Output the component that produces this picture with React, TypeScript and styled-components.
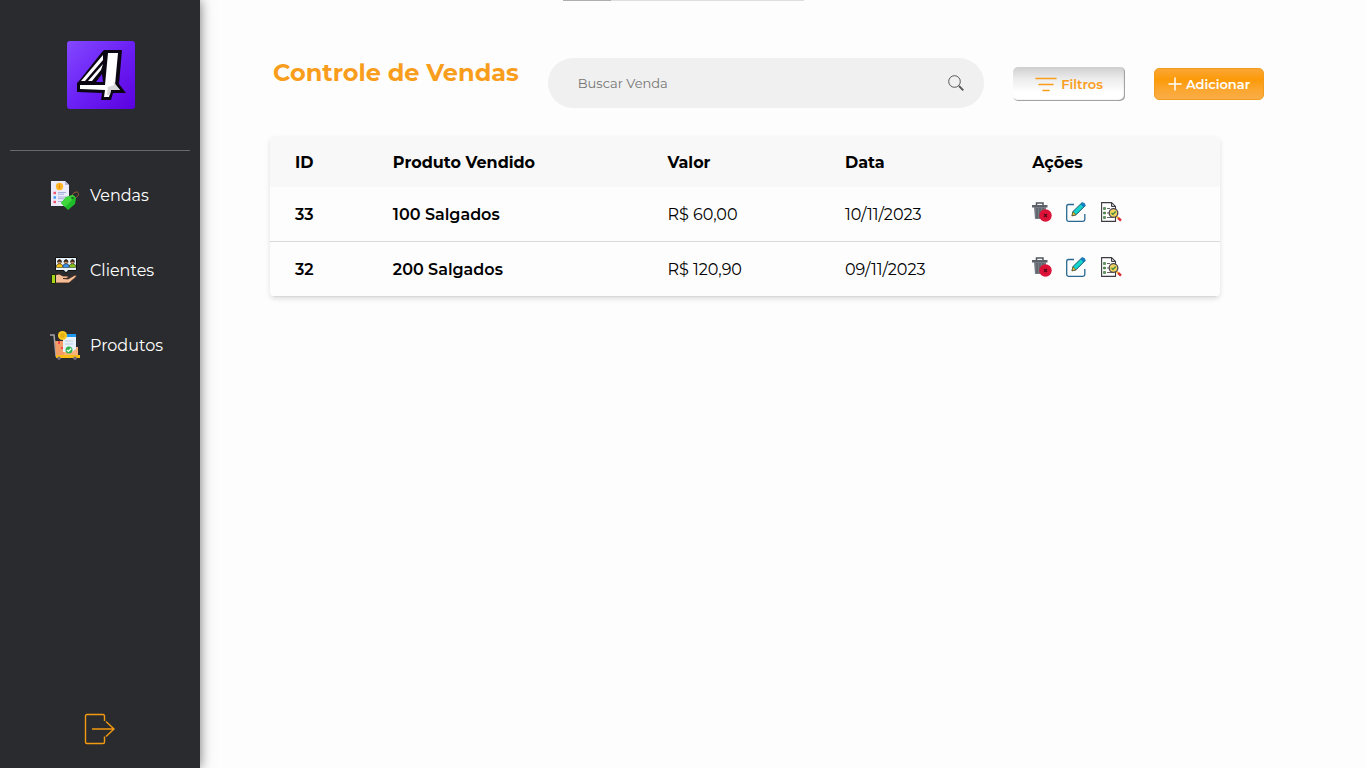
import React from "react";
import styled, { createGlobalStyle } from "styled-components";

const GlobalStyle = createGlobalStyle`
  *, *::before, *::after { box-sizing: border-box; }
  body {
    margin: 0;
    background: #fdfdfd;
    color: #000;
    font-family: Montserrat, Inter, "Open Sans", sans-serif;
    font-size: 16px;
  }
`;

const Layout = styled.div`
  display: flex;
  min-height: 100vh;
`;

const Sidebar = styled.aside`
  flex: 0 0 200px;
  display: flex;
  flex-direction: column;
  padding: 0 10px 23px;
  background: #2a2b2e;
  box-shadow: 0 0 12px rgba(0, 0, 0, 0.55);
`;

const Brand = styled.div`
  display: flex;
  justify-content: center;
  padding: 41px 0 41px 2px;
  border-bottom: 1px solid #68696b;
`;

const Nav = styled.nav`
  display: flex;
  flex-direction: column;
  flex: 1;
  padding-top: 7px;
`;

const NavLink = styled.a`
  display: flex;
  align-items: center;
  gap: 10px;
  height: 75px;
  padding-left: 40px;
  color: #fff;
  font-weight: 400;
  text-decoration: none;
`;

const PlainButton = styled.button`
  display: inline-flex;
  align-items: center;
  justify-content: center;
  padding: 0;
  border: 0;
  background: none;
  color: inherit;
  cursor: pointer;
`;

const LogoutButton = styled(PlainButton)`
  align-self: center;
  color: #f39a12;
`;

const Main = styled.main`
  flex: 1;
  min-width: 0;
  padding: 58px 102px 40px 70px;
`;

const Progress = styled.div`
  position: absolute;
  top: 0;
  left: 563px;
  width: 241px;
  height: 1px;
  background: linear-gradient(to right, #aeaeae 20%, #dedede 20%);
`;

const Toolbar = styled.header`
  display: flex;
  align-items: center;
  gap: 29px;
`;

const Title = styled.h1`
  margin: 0;
  padding: 0 0 20px 3px;
  color: #f99d1c;
  font-size: 24px;
  line-height: 30px;
  font-weight: 700;
  white-space: nowrap;
`;

const Search = styled.form`
  flex: 1;
  display: flex;
  align-items: center;
  min-width: 160px;
  height: 50px;
  padding: 0 20px 0 30px;
  border-radius: 25px;
  background: #f0f0f0;
  color: #555;
`;

const SearchInput = styled.input`
  flex: 1;
  min-width: 0;
  padding: 0;
  border: 0;
  outline: 0;
  background: none;
  font: inherit;
  font-size: 13px;
  &::placeholder { color: #757575; opacity: 1; }
`;

const ActionButton = styled.button<{ $primary?: boolean }>`
  flex: none;
  display: flex;
  align-items: center;
  justify-content: center;
  gap: 4px;
  width: ${(p) => (p.$primary ? 110 : 112)}px;
  height: ${(p) => (p.$primary ? 32 : 34)}px;
  margin-top: 2px;
  padding: 0;
  border: ${(p) => (p.$primary ? "1px solid #f39c1c" : "0")};
  border-radius: 5px;
  background: ${(p) =>
    p.$primary
      ? "linear-gradient(#fba636, #fc9a08 35%, #fba52b 65%, #f9ad47)"
      : "linear-gradient(#cfcfcf, #ececec 35%, #fff 75%)"};
  box-shadow: ${(p) => (p.$primary ? "none" : "inset -1px -1px 1px #999")};
  color: ${(p) => (p.$primary ? "#fff" : "#f99d1c")};
  font: inherit;
  font-size: 13px;
  font-weight: 600;
  cursor: pointer;
`;

const TableCard = styled.section`
  margin: 29px 44px 0 0;
  border-radius: 5px;
  box-shadow: 0 2px 5px rgba(0, 0, 0, 0.12);
  overflow: hidden;
`;

const Table = styled.table`
  width: 100%;
  table-layout: fixed;
  border-collapse: separate;
  border-spacing: 0;
  text-align: left;
`;

const HeadCell = styled.th<{ $width: number }>`
  width: ${(p) => p.$width}%;
  height: 50px;
  padding: 0 0 0 25px;
  background: #f8f8f8;
  font-weight: 700;
`;

const Cell = styled.td<{ $strong?: boolean }>`
  height: 55px;
  padding: 0 0 0 25px;
  border-bottom: 1px solid #d9d9db;
  color: #000;
  font-weight: ${(p) => (p.$strong ? 600 : 400)};
`;

const Actions = styled.div`
  display: flex;
  gap: 14px;
  padding-bottom: 5px;
`;

function Logo() {
  return (
    <svg width="68" height="68" viewBox="0 0 68 68" role="img" aria-label="Logo">
      <defs>
        <linearGradient id="violet" x1="0" y1="0" x2="1" y2="1">
          <stop offset="0" stopColor="#8348ff" />
          <stop offset="0.5" stopColor="#6b21f5" />
          <stop offset="1" stopColor="#5b00df" />
        </linearGradient>
      </defs>
      <rect width="68" height="68" rx="3" fill="url(#violet)" />
      <path d="M37 9H55L52 43L59 52L46 52L44 59L34 59L35 52L10 51L10 42L12 40L35 11Z" fill="#0b0612" />
      <path d="M41 12H51L48 44L53 49H44L42 56H37L38 49L13 48V44L38 44Z" fill="#fff" />
      <path d="M36 14L14 40H18L36 19ZM36 23L21 40H25L34 29Z" fill="#fff" />
      <path d="M35 33L29 41H36Z" fill="#6b21f5" />
      <path d="M46 40L53 49H44L43 54H40L41 46L47 44Z" fill="#d7d7da" />
    </svg>
  );
}

function SalesIcon() {
  return (
    <svg width="30" height="30" viewBox="0 0 30 30" aria-hidden="true">
      <path d="M1 0H15L19 4V25H1Z" fill="#ecebfb" />
      <path d="M15 0V4H19Z" fill="#b9b7dc" />
      <circle cx="9.500" cy="5.500" r="3.700" fill="#fdb62b" />
      <path d="M9.500 3.500V7.500" stroke="#e58a0b" strokeWidth="1.200" />
      <path d="M3.500 12H6" stroke="#f2526b" strokeWidth="2.400" />
      <path d="M3.500 16.500H6" stroke="#3a9bec" strokeWidth="2.400" />
      <path d="M3.500 21H6" stroke="#f2526b" strokeWidth="2.400" />
      <path d="M8 11.500H16M8 13.200H14M8 16H16M8 17.700H14M8 20.500H13" stroke="#a6afd9" />
      <path d="M22 18C20 12 28 9 28.500 12.500C29 15 26 17 23 17" fill="none" stroke="#976236" strokeWidth="1" />
      <path d="M16 16L23 14L26 17L25 23L18 29L11 22Z" fill="#1fbd2a" />
      <path d="M16 16L23 14L25 16L15 26L11 22Z" fill="#3ed83e" />
      <circle cx="22.500" cy="17" r="1.300" fill="#176b20" />
    </svg>
  );
}

function ClientsIcon() {
  const people = [
    { x: 9.5, shirt: "#f4c20d" },
    { x: 22.5, shirt: "#83c51d" },
    { x: 16, shirt: "#3b91ea" },
  ];
  return (
    <svg width="30" height="30" viewBox="0 0 30 30" aria-hidden="true">
      <path d="M5.500 1.500H26.500V14.500H18L16 17L14 14.500H5.500Z" fill="#e7f2fb" stroke="#111" />
      {people.map((p) => (
        <g key={p.x} stroke="#1d1d1d" strokeWidth="0.500">
          <path d={`M${p.x - 3} 11.500V9Q${p.x} 6 ${p.x + 3} 9V11.500Z`} fill={p.shirt} />
          <circle cx={p.x} cy="5.800" r="2" fill="#d9925c" />
          <path d={`M${p.x - 2} 5.500Q${p.x} 1.500 ${p.x + 2} 5.500Z`} fill="#3a2417" />
        </g>
      ))}
      <path d="M5 19L9 18L13 20H18Q19 22 16 22.500H13L18 23L25 19Q27 19 26 21L19 27H5Z" fill="#f5bd96" stroke="#38251c" strokeWidth="0.800" />
      <path d="M1.500 18.500H5.500V27.500H1.500Z" fill="#a5d516" stroke="#1d260b" />
    </svg>
  );
}

function ProductsIcon() {
  return (
    <svg width="30" height="30" viewBox="0 0 30 30" aria-hidden="true">
      <path d="M0 4H4L6 25H29" fill="none" stroke="#a6a3aa" strokeWidth="1.500" />
      <path d="M5 10H14V24H6Z" fill="#f39c65" />
      <path d="M14 16H28V24H14Z" fill="#fbb279" />
      <path d="M9 10V13M11 17H13" fill="none" stroke="#ee4a53" strokeWidth="2" />
      <path d="M13 3H26V18L22 21H13Z" fill="#e8f2ff" />
      <path d="M16 3H26V6H13Z" fill="#1e98ee" />
      <path d="M15 10H23M15 13H23" stroke="#bccde1" />
      <circle cx="12.500" cy="4.500" r="4.500" fill="#fdca23" />
      <circle cx="12.500" cy="4.500" r="2.500" fill="#e6b010" />
      <path d="M6 24H30V27H6Z" fill="#f9bd18" />
      <circle cx="9" cy="27.300" r="1.700" fill="#75687a" />
      <circle cx="25" cy="27.300" r="1.700" fill="#75687a" />
      <circle cx="19" cy="19" r="3.500" fill="#2eb34b" />
      <path d="M17 19L18.500 20.500L21.200 17.500" fill="none" stroke="#fff" strokeWidth="1.200" />
    </svg>
  );
}

function LogoutIcon() {
  return (
    <svg width="32" height="32" viewBox="0 0 32 32" fill="none" stroke="currentColor" strokeWidth="1.400" aria-hidden="true">
      <path d="M20.500 8V3Q20.500 1.500 19 1.500H3Q1.500 1.500 1.500 3V29Q1.500 30.500 3 30.500H19Q20.500 30.500 20.500 29V23.500M8 16H30M22 8.500L30 16L22 23.500" />
    </svg>
  );
}

function SearchIcon() {
  return (
    <svg width="16" height="16" viewBox="0 0 16 16" fill="none" stroke="currentColor" aria-hidden="true">
      <circle cx="6.500" cy="6.500" r="5.800" />
      <path d="M11 11L15.300 15.300" strokeWidth="1.800" />
    </svg>
  );
}

function FilterIcon() {
  return (
    <svg width="22" height="15" viewBox="0 0 22 15" stroke="currentColor" strokeWidth="1.500" strokeLinecap="round" aria-hidden="true">
      <path d="M1 1.500H21M4 7.500H18M8 13.500H14" />
    </svg>
  );
}

function PlusIcon() {
  return (
    <svg width="14" height="14" viewBox="0 0 14 14" stroke="currentColor" strokeWidth="1.500" strokeLinecap="round" aria-hidden="true">
      <path d="M7 1V13M1 7H13" />
    </svg>
  );
}

function TrashIcon() {
  return (
    <svg width="20" height="20" viewBox="0 0 20 20" aria-hidden="true">
      <path d="M4.500 3V1H11V3" fill="none" stroke="#50545c" strokeWidth="1.500" />
      <path d="M0 3H15.500V5.500H0Z" fill="#5c6068" />
      <path d="M2 5H14V17H3Z" fill="#777b83" />
      <path d="M5 6V16M8 6V16M11 6V10" stroke="#50545c" />
      <circle cx="13.500" cy="13.500" r="6.200" fill="#dc1238" />
      <path d="M12 12L15 15M15 12L12 15" stroke="#5b0718" strokeWidth="1.300" />
    </svg>
  );
}

function EditIcon() {
  return (
    <svg width="21" height="20" viewBox="0 0 21 20" aria-hidden="true">
      <path d="M8 2.500H2.500Q.7 2.500 .7 4.500V17.500Q.7 19.300 2.500 19.300H17Q18.800 19.300 18.800 17.500V12" fill="none" stroke="#286892" strokeWidth="1.300" />
      <path d="M6 13.800L7 9.500L16 .7L19.300 3.500L10 12.800Z" fill="#16d3cc" stroke="#12546b" />
      <path d="M14.500 2.200L16 .7Q17.500 0 19 1.500Q20 2.800 18.500 4.300L17.500 5.300Z" fill="#167dc2" />
      <path d="M6 13.800L7 9.800L10 12.800Z" fill="#f5c833" stroke="#4a4a23" strokeWidth="0.600" />
    </svg>
  );
}

function DetailsIcon() {
  return (
    <svg width="21" height="20" viewBox="0 0 21 20" aria-hidden="true">
      <path d="M.6 .6H10.500L14.500 4.500V19.400H.6Z" fill="#fff" stroke="#3b3b40" strokeWidth="1.100" />
      <path d="M10.500 .6V4.500H14.500Z" fill="#c8c4d0" stroke="#3b3b40" />
      <path d="M2.500 5.500H4.500V7.500H2.500ZM2.500 10H4.500V12H2.500ZM2.500 14.500H4.500V16.500H2.500Z" fill="#54a653" stroke="#244c25" strokeWidth="0.500" />
      <path d="M6 6.500H9M6 11H8M6 15.500H12" stroke="#666" />
      <path d="M15.500 14.500L17.500 16.300" stroke="#f0b52c" strokeWidth="2" />
      <path d="M17.200 16L20 18.600" stroke="#d92c35" strokeWidth="2.400" />
      <circle cx="12.500" cy="11" r="4.300" fill="#f0d35c" stroke="#4a4550" strokeWidth="1.300" />
      <path d="M10.500 11L12 12.500L14.700 9.500" fill="none" stroke="#34833e" strokeWidth="1.200" />
    </svg>
  );
}

const columns = [
  { label: "ID", width: 10.3 },
  { label: "Produto Vendido", width: 28.9 },
  { label: "Valor", width: 18.7 },
  { label: "Data", width: 19.7 },
  { label: "Ações", width: 22.4 },
];

const sales = [
  { id: 33, product: "100 Salgados", value: "R$ 60,00", date: "10/11/2023" },
  { id: 32, product: "200 Salgados", value: "R$ 120,90", date: "09/11/2023" },
];

export default function App() {
  return (
    <>
      <GlobalStyle />
      <Layout>
        <Sidebar>
          <Brand><Logo /></Brand>
          <Nav>
            <NavLink href="#vendas"><SalesIcon />Vendas</NavLink>
            <NavLink href="#clientes"><ClientsIcon />Clientes</NavLink>
            <NavLink href="#produtos"><ProductsIcon />Produtos</NavLink>
          </Nav>
          <LogoutButton type="button" aria-label="Sair"><LogoutIcon /></LogoutButton>
        </Sidebar>
        <Main>
          <Progress />
          <Toolbar>
            <Title>Controle de Vendas</Title>
            <Search role="search">
              <SearchInput type="text" placeholder="Buscar Venda" aria-label="Buscar Venda" />
              <PlainButton type="button" aria-label="Buscar"><SearchIcon /></PlainButton>
            </Search>
            <ActionButton type="button"><FilterIcon />Filtros</ActionButton>
            <ActionButton type="button" $primary><PlusIcon />Adicionar</ActionButton>
          </Toolbar>
          <TableCard>
            <Table>
              <thead>
                <tr>
                  {columns.map((c) => (
                    <HeadCell key={c.label} $width={c.width} scope="col">{c.label}</HeadCell>
                  ))}
                </tr>
              </thead>
              <tbody>
                {sales.map((s) => (
                  <tr key={s.id}>
                    <Cell $strong>{s.id}</Cell>
                    <Cell $strong>{s.product}</Cell>
                    <Cell>{s.value}</Cell>
                    <Cell>{s.date}</Cell>
                    <Cell>
                      <Actions>
                        <PlainButton type="button" aria-label="Excluir"><TrashIcon /></PlainButton>
                        <PlainButton type="button" aria-label="Editar"><EditIcon /></PlainButton>
                        <PlainButton type="button" aria-label="Detalhes"><DetailsIcon /></PlainButton>
                      </Actions>
                    </Cell>
                  </tr>
                ))}
              </tbody>
            </Table>
          </TableCard>
        </Main>
      </Layout>
    </>
  );
}
